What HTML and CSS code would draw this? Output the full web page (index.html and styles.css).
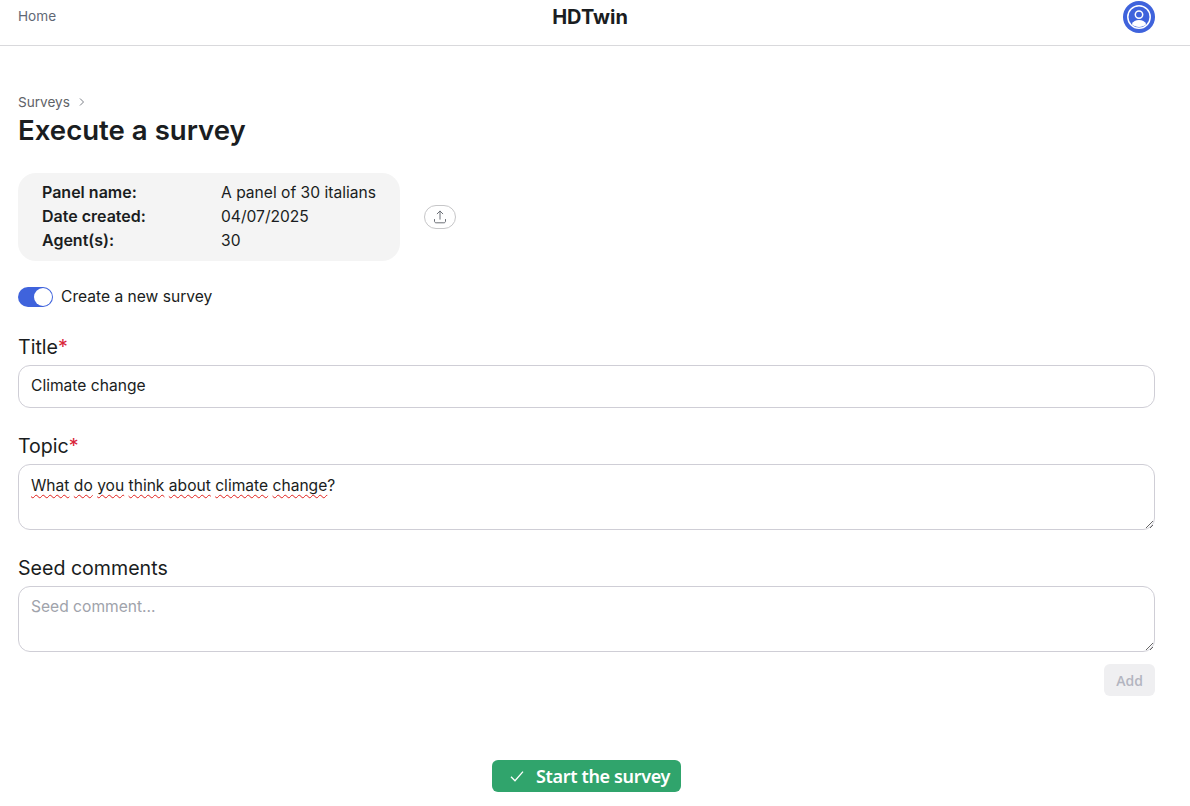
FILE: index.html
```html
<!DOCTYPE html>
<html lang="en">
<head>
<meta charset="utf-8">
<title>HDTwin</title>
<link rel="stylesheet" href="styles.css">
</head>
<body>
<header class="topbar">
  <a class="nav-link">Home</a>
  <div class="brand">HDTwin</div>
  <button class="avatar" aria-label="Account">
    <svg viewBox="0 0 32 32" width="32" height="32">
      <circle cx="16" cy="16" r="16" fill="#3f63dc"/>
      <circle cx="16" cy="16" r="11.2" fill="none" stroke="#fff" stroke-width="1.5"/>
      <circle cx="16" cy="13.6" r="3.7" fill="none" stroke="#fff" stroke-width="1.5"/>
      <path d="M8.8 23.2c1.3-3 4-4.200 7.200-4.200s5.900 1.200 7.200 4.200c-2 1.700-4.500 2.800-7.200 2.800s-5.200-1.100-7.200-2.800z" fill="#fff"/>
    </svg>
  </button>
</header>
<main class="page">
  <nav class="crumbs">
    <span>Surveys</span>
    <svg class="crumb-chevron" viewBox="0 0 8 10" width="8" height="10"><path d="M2 1.500 5.500 5 2 8.500" fill="none" stroke="#7b7f87" stroke-width="1"/></svg>
  </nav>
  <h1 class="title">Execute a survey</h1>

  <section class="panel-row">
    <dl class="panel">
      <dt>Panel name:</dt><dd>A panel of 30 italians</dd>
      <dt>Date created:</dt><dd>04/07/2025</dd>
      <dt>Agent(s):</dt><dd>30</dd>
    </dl>
    <button class="export" aria-label="Export">
      <svg viewBox="0 0 16 16" width="16" height="16"><path d="M8 10.200V2.200M5.200 4.800 8 2l2.800 2.800M2.500 10.500v1.700c0 1 .7 1.600 1.600 1.600h7.800c.9 0 1.600-.6 1.600-1.600v-1.700" fill="none" stroke="#6b6f76" stroke-width="1" stroke-linecap="round" stroke-linejoin="round"/></svg>
    </button>
  </section>

  <label class="switch-row">
    <span class="switch"><span class="knob"></span></span>
    <span>Create a new survey</span>
  </label>

  <div class="field">
    <label class="field-label">Title<span class="req">*</span></label>
    <input class="input single" type="text" value="Climate change">
  </div>
  <div class="field">
    <label class="field-label">Topic<span class="req">*</span></label>
    <div class="input area area-filled"><span class="sp">What</span> <span class="sp">do</span> <span class="sp">you</span> <span class="sp">think</span> <span class="sp">about</span> <span class="sp">climate</span> <span class="sp">change</span>?</div>
  </div>
  <div class="field">
    <label class="field-label">Seed comments</label>
    <textarea class="input area" placeholder="Seed comment..."></textarea>
  </div>
  <div class="add-row"><button class="add">Add</button></div>
  <div class="start-row">
    <button class="start">
      <svg viewBox="0 0 16 16" width="16" height="16"><path d="M2 8.700 6 12.800 14 3.600" fill="none" stroke="#fff" stroke-width="1.300"/></svg>
      Start the survey
    </button>
  </div>
</main>
</body>
</html>
```

FILE: styles.css
```css
* { box-sizing: border-box; }
html, body { margin: 0; height: 100%; }
body {
  background: #fff;
  color: #1a1d21;
  font-family: Inter, "Noto Sans", sans-serif;
  font-size: 15.6px;
  overflow: hidden;
}
.topbar {
  position: relative;
  height: 46px;
  border-bottom: 1px solid #d9d9dc;
  padding: 0 35px 0 18px;
  display: flex;
  justify-content: space-between;
  align-items: flex-start;
}
.nav-link { font-size: 13.6px; color: #5f6875; line-height: 16px; margin-top: 8px; }
.brand {
  position: absolute;
  left: 0;
  right: 10px;
  top: 6px;
  text-align: center;
  font-size: 20px;
  font-weight: 700;
  line-height: 22px;
}
.avatar { border: 0; background: none; padding: 0; margin-top: 1px; width: 32px; height: 32px; display: block; }
.avatar svg { display: block; }
.page { padding: 48px 35px 0 18px; }
.crumbs { display: flex; align-items: center; gap: 8px; font-size: 13.6px; line-height: 16px; color: #5f6368; }
.title { margin: 4px 0 0; font-size: 27.6px; line-height: 32px; font-weight: 600; color: #1a1d21; }
.panel-row { display: flex; align-items: center; gap: 24px; margin-top: 27px; }
.panel {
  margin: 0;
  width: 382px;
  height: 88px;
  padding: 7px 24px 9px;
  background: #f4f4f4;
  border-radius: 18px;
  display: grid;
  grid-template-columns: 179px 1fr;
  grid-auto-rows: 24px;
  align-items: center;
  font-size: 15.6px;
}
.panel dt { font-weight: 600; font-size: 16px; }
.panel dd { margin: 0; }
.export {
  width: 32px;
  height: 24px;
  padding: 0;
  border: 1px solid #c6c6c8;
  border-radius: 12px;
  background: #fff;
  display: flex;
  align-items: center;
  justify-content: center;
}
.switch-row { display: flex; align-items: center; gap: 8px; margin-top: 26px; font-size: 15.6px; line-height: 20px; }
.switch { width: 35px; height: 20px; border-radius: 10px; background: #3f63dc; position: relative; display: block; }
.knob { position: absolute; right: 1px; top: 1px; width: 18px; height: 18px; border-radius: 50%; background: #fff; }
.field { margin-top: 27px; }
.field-label { display: block; font-size: 19.6px; line-height: 24px; margin-bottom: 6px; margin-top: -1px; color: #1a1d21; }
.switch-row + .field { margin-top: 29px; }
.req { color: #d9253a; }
.input {
  display: block;
  width: 100%;
  height: 43px;
  padding: 0 12px;
  border: 1px solid #cfced6;
  border-radius: 12px;
  background: #fff;
  color: #1a1d21;
  font: 400 15.6px/24px Inter, "Noto Sans", sans-serif;
  outline: none;
}
.single { padding-bottom: 2px; }
.area {
  height: 66px;
  padding: 8px 12px;
  resize: both;
  overflow: auto;
}
.area-filled { padding-top: 9px; }
.area::placeholder { color: #a0a3ab; opacity: 1; }
.sp { text-decoration: underline wavy #e0201c 1.2px; text-underline-offset: 3px; }
.add-row { display: flex; justify-content: flex-end; margin-top: 12px; }
.add {
  width: 51px;
  height: 32px;
  border: 0;
  border-radius: 6px;
  background: #efeff1;
  color: #b3b5c0;
  font: 600 14px "Open Sans", sans-serif;
}
.start-row { display: flex; justify-content: center; margin-top: 64px; }
.start {
  height: 32px;
  width: 189px;
  padding: 0 0 0 6px;
  border: 0;
  border-radius: 6px;
  background: #30a46c;
  color: #fff;
  font: 600 18px "Noto Sans", sans-serif;
  letter-spacing: -0.35px;
  display: flex;
  align-items: center;
  justify-content: center;
  gap: 11px;
}
```
